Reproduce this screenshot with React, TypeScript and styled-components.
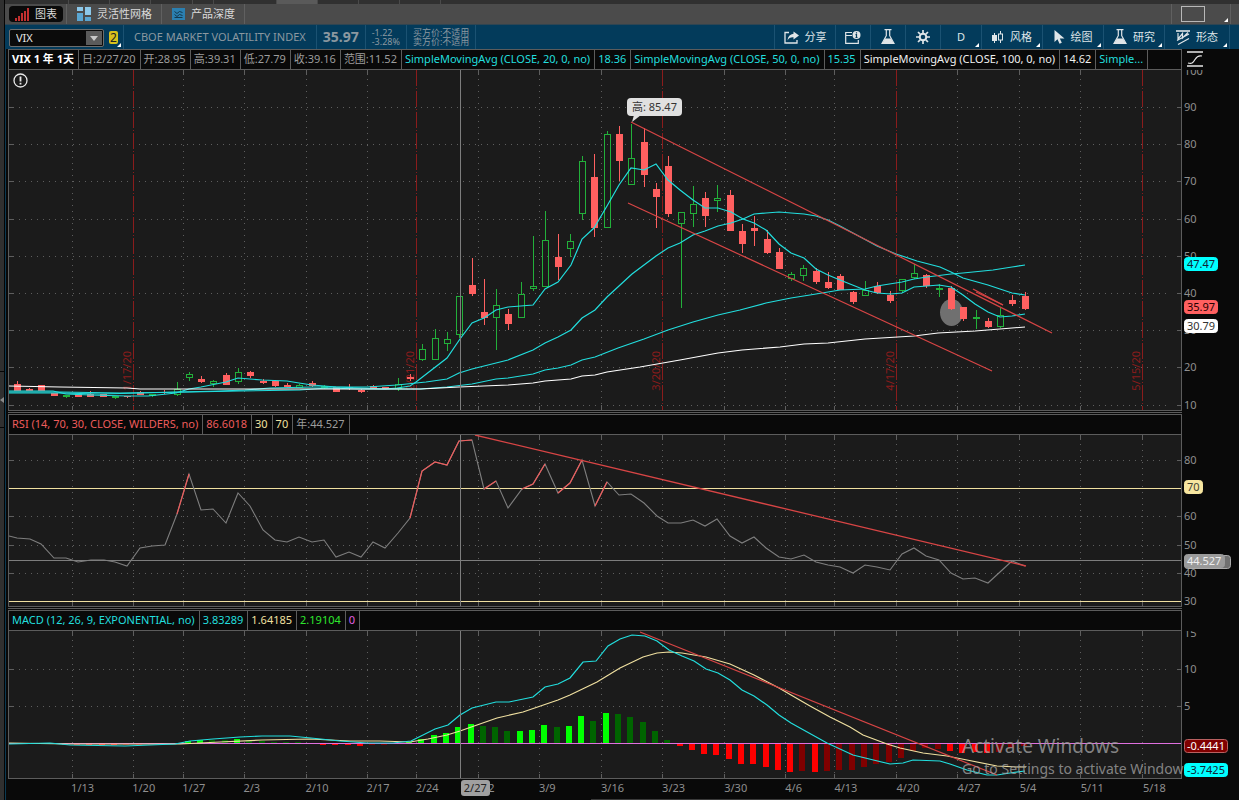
import React from "react";
import styled, { createGlobalStyle } from "styled-components";

const GlobalStyle = createGlobalStyle`
  * { box-sizing: border-box; }
  html, body { margin: 0; background: #090909; }
  body {
    font-family: "Noto Sans", "Noto Sans CJK SC", sans-serif;
    font-size: 11px;
    line-height: 16px;
    color: #d6d6d6;
  }
  button, select, input { font: inherit; color: inherit; margin: 0; }
`;

/* ---------- page frame ---------- */

const Page = styled.div`
  display: grid;
  grid-template-columns: 5px 1fr;
  min-height: 100vh;
  overflow: hidden;
`;
const Rail = styled.aside`
  background: #303030;
  border-right: 1px solid #050505;
  padding-top: 371px;
  display: flex;
  flex-direction: column;
`;
const RailSection = styled.div`
  height: 57px;
  border-top: 1px solid #050505;
  border-bottom: 1px solid #050505;
  display: flex;
  align-items: center;
`;
const Main = styled.main`
  min-width: 0;
`;
const Workspace = styled.div`
  border-left: 1px solid #0c3a52;
  padding-left: 2px;
`;

/* ---------- window strip and tabs ---------- */

const WindowStrip = styled.div`
  height: 4px;
  background: #303030;
  display: flex;
  overflow: hidden;
`;
const StripSlot = styled.span<{ $w: number; $active?: boolean }>`
  width: ${(p) => p.$w}px;
  border-right: 1px solid #4a4a4a;
  background: ${(p) => (p.$active ? "#5a5a5a" : "transparent")};
`;
const TabBar = styled.nav`
  height: 21px;
  background: #4b4b4b;
  border-bottom: 1px solid #2f4552;
  display: flex;
  align-items: stretch;
`;
const TabSlot = styled.div`
  display: flex;
  align-items: center;
  padding: 0 3px 0 4px;
  border-right: 1px solid #606060;
`;
const Tab = styled.button<{ $active?: boolean }>`
  display: flex;
  align-items: center;
  gap: 6px;
  height: 16px;
  padding: 0 6px;
  border: 0;
  border-radius: 4px;
  white-space: nowrap;
  background: ${(p) => (p.$active ? "#0a0a0a" : "transparent")};
  color: #dadada;
`;
const Spacer = styled.div`
  flex: 1;
`;
const LayoutButton = styled.button`
  position: relative;
  width: 60px;
  padding: 0 0 0 9px;
  margin-right: 8px;
  border: solid #606060;
  border-width: 0 1px;
  background: none;
  display: flex;
  align-items: center;
`;

/* ---------- symbol toolbar ---------- */

const ToolBar = styled.header`
  height: 24px;
  background: #033b5b;
  display: flex;
  align-items: stretch;
  padding-left: 4px;
`;
const SymbolBox = styled.div`
  display: flex;
  align-items: center;
  width: 95px;
  height: 18px;
  margin: 4px 0 2px;
  background: #0b0b0b;
  border: 1px solid #6d6d6d;
  border-radius: 2px;
`;
const SymbolInput = styled.input`
  width: 76px;
  height: 16px;
  padding: 0 6px;
  border: 0;
  outline: 0;
  background: transparent;
  color: #e4e4e4;
`;
const SymbolDrop = styled.button`
  width: 16px;
  height: 14px;
  padding: 0;
  border: 0;
  background: #5b5b5b;
  display: flex;
  align-items: center;
  justify-content: center;
`;
const LinkBadge = styled.button`
  position: relative;
  width: 20px;
  padding: 0 5px;
  border: 0;
  border-right: 1px solid #1b5272;
  background: none;
  display: flex;
  align-items: center;
`;
const BadgeFace = styled.span`
  width: 10px;
  height: 13px;
  border-radius: 2px;
  background: #d8c11c;
  color: #222;
  font-size: 12px;
  line-height: 13px;
  text-align: center;
`;
const QuoteCell = styled.div<{ $pad: number }>`
  display: flex;
  flex-direction: column;
  justify-content: center;
  padding: 0 ${(p) => p.$pad}px;
  border-right: 1px solid #1b5272;
  color: #8b98a0;
  white-space: nowrap;
`;
const Instrument = styled.span`
  font-size: 11px;
`;
const LastPrice = styled.strong`
  font-size: 14px;
`;
const Small = styled.span`
  font-size: 9px;
  line-height: 9px;
`;
const ToolButton = styled.button<{ $w: number }>`
  position: relative;
  width: ${(p) => p.$w}px;
  padding: 0;
  border: 0;
  border-left: 1px solid #1b5272;
  background: none;
  color: #dfe5e8;
  display: flex;
  align-items: center;
  justify-content: center;
  gap: 6px;
  white-space: nowrap;
`;
const Corner = styled.i`
  position: absolute;
  right: 2px;
  bottom: 2px;
  border: 2px solid transparent;
  border-right-color: #fff;
  border-bottom-color: #fff;
`;
const ToolEnd = styled.div`
  width: 10px;
  border-left: 1px solid #1b5272;
`;

/* ---------- study panels ---------- */

const Panel = styled.section`
  display: grid;
  grid-template-columns: 1fr 57px;
`;
const Legend = styled.div`
  height: 21px;
  min-width: 0;
  display: flex;
  overflow: hidden;
  border: 1px solid #5c5c5c;
  background: #090909;
`;
const LegendCell = styled.span<{ $color?: string; $bold?: boolean }>`
  display: flex;
  align-items: center;
  padding: 0 4px 1px 3px;
  border-right: 1px solid #5c5c5c;
  white-space: nowrap;
  color: ${(p) => p.$color ?? "#9c9c9c"};
  font-weight: ${(p) => (p.$bold ? 700 : 400)};
`;
const AxisHead = styled.div`
  display: flex;
  padding: 2px 0 0 5px;
`;
const Plot = styled.div<{ $h: number }>`
  position: relative;
  height: ${(p) => p.$h}px;
  background: #1b1b1b;
  border: solid #5c5c5c;
  border-width: 0 1px 1px;
`;
const PlotSvg = styled.svg`
  position: relative;
  display: block;
  width: 100%;
  height: 100%;
  polyline, line, rect, ellipse { vector-effect: non-scaling-stroke; }
`;
const AxisSvg = styled.svg`
  display: block;
  text { font-size: 11px; }
`;
const Divider = styled.div`
  height: 3px;
  margin-right: 57px;
  border: solid #090909;
  border-width: 1px 0;
  background: #5c5c5c;
`;
const ExpiryLabel = styled.span`
  position: absolute;
  bottom: 19px;
  width: 14px;
  margin-left: -13px;
  line-height: 14px;
  color: #8a1c1c;
  writing-mode: vertical-rl;
  transform: rotate(180deg);
`;
const PeakBubble = styled.span`
  position: absolute;
  top: 28px;
  height: 18px;
  padding: 0 5px;
  border-radius: 4px;
  background: #e0e0e0;
  color: #333;
  line-height: 18px;
  white-space: nowrap;
`;
const Notice = styled.button`
  position: absolute;
  left: 4px;
  top: 3px;
  padding: 0;
  border: 0;
  background: none;
  display: flex;
`;
const Watermark = styled.div`
  position: absolute;
  top: 103px;
  color: rgba(160, 160, 160, 0.8);
  white-space: nowrap;
  pointer-events: none;
`;
const WatermarkTitle = styled.div`
  font-size: 19px;
  line-height: 24px;
`;
const WatermarkText = styled.div`
  font-size: 14px;
  line-height: 22px;
`;
const TimeAxis = styled.div`
  position: relative;
  height: 20px;
  margin-right: 57px;
  color: #8f8f8f;
`;
const DateLabel = styled.span`
  position: absolute;
  top: 1px;
`;
const DateTag = styled(DateLabel)`
  padding: 0 3px;
  border-radius: 3px;
  background: #a0a0a0;
  color: #222;
`;
const ScrollEdge = styled.div`
  width: 320px;
  height: 1px;
  margin-left: 583px;
  background: #3a3a3a;
`;

/* ---------- chart data ---------- */

const LEFT = 9;
const WIDTH = 1172;
const pct = (x: number) => `${((x - LEFT) / WIDTH) * 100}%`;
const barX = (i: number) => Math.floor(17.2 + 12.293 * i);

const CYAN = "#22dede";
const RED = "#ff6060";
const GREEN = "#22b03a";
const TREND = "#d84545";
const CREAM = "#f0e0a0";

const weeks: [number, string][] = [
  [72, "1/13"], [133, "1/20"], [183, "1/27"], [244, "2/3"], [306, "2/10"], [367, "2/17"],
  [416, "2/24"], [478, "3/2"], [539, "3/9"], [601, "3/16"], [662, "3/23"], [724, "3/30"],
  [785, "4/6"], [834, "4/13"], [896, "4/20"], [957, "4/27"], [1019, "5/4"], [1080, "5/11"], [1142, "5/18"],
];
const expiries: [number, string][] = [
  [133, "1/17/20"], [416, "2/21/20"], [662, "3/20/20"], [896, "4/17/20"], [1142, "5/15/20"],
];

/* direction, high, body top, body bottom, low */
const candles: ["u" | "d", number, number, number, number][] = [
  ["d", 381, 384, 391, 391], ["d", 388, 389, 391, 391], ["d", 385, 385, 391, 391], ["d", 393, 393, 396, 396],
  ["u", 395, 395, 396, 397], ["d", 394, 394, 397, 397], ["d", 391, 394, 397, 397], ["d", 394, 394, 397, 397],
  ["u", 396, 396, 397, 398], ["d", 396, 396, 397, 398], ["d", 391, 392, 395, 395], ["u", 394, 394, 395, 396],
  ["d", 390, 392, 393, 394], ["u", 382, 389, 394, 395], ["u", 372, 374, 377, 380], ["d", 376, 379, 382, 383],
  ["u", 380, 381, 383, 386], ["d", 373, 375, 385, 385], ["u", 368, 372, 381, 383], ["d", 371, 372, 376, 378],
  ["d", 379, 381, 383, 384], ["d", 380, 381, 386, 387], ["d", 383, 385, 387, 388], ["u", 384, 385, 387, 387],
  ["d", 381, 383, 386, 387], ["u", 385, 386, 387, 388], ["d", 387, 387, 392, 392], ["d", 384, 387, 388, 390],
  ["d", 389, 390, 392, 393], ["d", 385, 386, 388, 388], ["d", 387, 387, 389, 389], ["u", 378, 384, 388, 390],
  ["d", 374, 377, 379, 381], ["u", 344, 349, 359, 360], ["u", 329, 338, 359, 359], ["u", 332, 339, 343, 350],
  ["u", 296, 296, 334, 337], ["d", 258, 285, 294, 296], ["d", 279, 312, 318, 325], ["u", 289, 305, 317, 349],
  ["d", 309, 314, 324, 330], ["u", 282, 294, 317, 317], ["u", 236, 286, 288, 290], ["u", 211, 240, 286, 286],
  ["d", 234, 257, 267, 280], ["u", 234, 241, 248, 256], ["u", 156, 161, 213, 219], ["d", 154, 177, 228, 237],
  ["u", 131, 134, 227, 227], ["d", 126, 134, 161, 181], ["u", 124, 158, 184, 184], ["d", 128, 142, 175, 187],
  ["d", 183, 189, 197, 228], ["d", 156, 166, 214, 217], ["u", 212, 212, 223, 307], ["u", 186, 204, 213, 226],
  ["d", 192, 198, 216, 227], ["u", 185, 198, 200, 211], ["d", 190, 195, 231, 231], ["d", 224, 231, 244, 253],
  ["d", 216, 228, 231, 246], ["d", 230, 239, 253, 254], ["d", 248, 252, 269, 269], ["u", 272, 274, 278, 280],
  ["u", 265, 268, 275, 280], ["d", 268, 271, 282, 284], ["d", 272, 282, 288, 289], ["d", 274, 276, 290, 290],
  ["d", 291, 292, 302, 304], ["u", 281, 290, 295, 295], ["d", 282, 286, 293, 294], ["d", 291, 295, 301, 303],
  ["u", 279, 279, 290, 292], ["u", 264, 273, 277, 278], ["d", 274, 275, 286, 288], ["u", 284, 288, 289, 296],
  ["d", 286, 288, 309, 310], ["d", 307, 307, 319, 321], ["u", 310, 317, 318, 328], ["d", 318, 321, 327, 328],
  ["u", 308, 315, 326, 327], ["d", 295, 300, 304, 306], ["d", 292, 296, 309, 310],
];

const smaFast =
  "9,391 53,391 66,394 90,395 127,396 148,396 176,393 189,389 201,387 226,382 238,378 262,380 287,381 299,383 312,385 336,387 361,388 385,389 397,388 410,386 416,382 447,358 460,339 472,323 484,318 496,310 508,307 533,305 545,289 558,282 571,265 582,239 594,228 607,206 619,185 631,168 644,170 656,164 668,180 680,190 693,200 705,208 718,208 731,212 743,219 754,223 766,230 779,244 791,253 804,258 816,269 828,275 840,280 865,290 877,293 891,294 902,293 914,287 927,286 939,285 951,287 963,295 975,304 988,312 1000,317 1012,316 1025,314";
const sma20 =
  "9,393 60,393 100,394 180,392 220,391 245,390 270,388 312,387 367,387 397,385 426,382 447,379 459,373 472,369 508,360 533,350 545,343 558,337 571,330 582,318 595,310 607,297 619,286 632,274 656,256 668,248 680,243 693,235 705,231 718,226 731,223 743,219 754,214 766,213 779,212 791,213 804,214 816,216 828,220 840,226 853,233 866,240 877,246 896,254 917,261 940,267 951,272 963,278 988,285 1000,289 1012,293 1025,295";
const sma50 =
  "9,392 60,392 120,393 190,392 240,391 300,390 327,388 360,389 420,389 447,387 472,384 496,379 508,378 533,374 545,370 558,368 571,365 582,360 595,357 618,348 644,339 668,330 693,322 718,315 740,310 766,303 791,298 810,295 840,290 865,289 877,286 902,282 914,279 927,277 951,274 963,273 993,270 1012,267 1025,265";
const sma100 =
  "9,386 60,387 127,388 140,389 300,389 421,389 459,387 508,385 533,383 545,381 571,379 582,376 595,375 607,372 640,367 680,360 718,353 742,350 780,347 804,344 828,343 865,339 914,336 938,333 975,331 1000,329 1025,327";

const rsiPts: [number, number][] = [
  [9, 536], [17, 538], [30, 539], [41, 544], [54, 558], [66, 558], [78, 562], [91, 560], [104, 560], [115, 562],
  [127, 566], [140, 548], [152, 546], [165, 545], [177, 514], [189, 474], [201, 510], [213, 509], [226, 523],
  [238, 493], [250, 506], [263, 530], [275, 540], [287, 542], [299, 537], [312, 542], [324, 540], [336, 557],
  [349, 552], [361, 557], [373, 542], [385, 548], [398, 533], [410, 518], [422, 471], [435, 462], [447, 465],
  [459, 441], [472, 440], [484, 489], [496, 481], [508, 508], [522, 489], [533, 484], [545, 464], [558, 493],
  [570, 483], [582, 460], [595, 506], [607, 482], [619, 495], [631, 494], [644, 503], [657, 516], [668, 523],
  [681, 523], [693, 520], [705, 526], [717, 519], [730, 536], [742, 543], [754, 537], [766, 548], [779, 557],
  [791, 559], [804, 555], [816, 562], [828, 565], [840, 567], [853, 573], [865, 565], [877, 567], [890, 570],
  [902, 554], [914, 548], [926, 556], [939, 560], [951, 573], [963, 579], [975, 578], [988, 583], [1000, 572],
  [1012, 561], [1025, 566],
];
const rsiHot = ["177,514 189,474", "410,518 422,471 435,462 447,465 459,441 472,440", "484,489 496,481", "522,489 533,484 545,464", "558,493 570,483 582,460", "595,506 607,482"];

const macdLine =
  "9,744 50,743 70,745 125,746 175,744 190,741 213,739 240,737 262,736 290,736 311,738 340,741 367,743 393,743 411,741 435,729 448,725 460,715 472,708 496,702 509,702 533,697 545,687 558,684 570,678 583,662 596,661 608,646 620,639 632,635 645,636 657,641 669,650 682,656 694,661 706,669 718,673 730,680 742,690 754,696 767,705 779,715 791,723 827,743 853,755 890,764 903,763 913,760 940,761 950,764 967,770 987,775 997,775 1010,773 1025,771";
const signalLine =
  "9,743 70,744 180,744 220,742 262,740 310,739 350,741 380,741 410,742 428,739 447,735 460,731 477,725 497,718 523,712 558,700 570,695 597,682 620,668 643,657 657,653 669,652 682,653 706,657 730,664 754,675 779,688 791,695 810,706 830,717 850,727 863,735 887,744 900,748 923,753 947,756 967,760 997,766 1017,767 1026,767";

/* histogram end y and colour: G/g bright and dark green, R/r bright and dark red */
const hist: [string, number][] = [
  ["R", 744], ["g", 743], ["R", 744], ["R", 744], ["R", 745], ["R", 745], ["R", 745], ["R", 745],
  ["R", 745], ["r", 745], ["r", 745], ["r", 745], ["r", 744], ["r", 744], ["G", 741], ["G", 740], ["g", 740],
  ["g", 740], ["G", 739], ["g", 740], ["g", 741], ["g", 742], ["g", 742], ["g", 742], ["R", 744], ["R", 745],
  ["R", 745], ["R", 745], ["R", 746], ["r", 745], ["r", 745], ["r", 744], ["G", 742], ["G", 739], ["G", 735],
  ["G", 733], ["G", 727], ["G", 724], ["g", 726], ["g", 727], ["g", 731], ["G", 731], ["G", 730], ["G", 725],
  ["g", 727], ["G", 726], ["G", 716], ["g", 721], ["G", 713], ["g", 714], ["g", 717], ["g", 722], ["g", 731],
  ["g", 740], ["R", 746], ["R", 750], ["R", 754], ["R", 755], ["R", 759], ["R", 764], ["R", 764], ["R", 767],
  ["R", 770], ["R", 772], ["r", 771], ["R", 772], ["r", 771], ["r", 770], ["r", 770], ["r", 767], ["r", 764],
  ["r", 762], ["r", 758], ["r", 751], ["r", 748], ["r", 749], ["R", 751], ["R", 753], ["R", 752], ["R", 753],
  ["r", 752], ["r", 748], ["r", 746],
];
const histColor: Record<string, string> = { G: "#00ff00", g: "#006400", R: "#ff0000", r: "#800000" };

/* ---------- chart parts ---------- */

function Grid({ top, bottom, rows }: { top: number; bottom: number; rows: number[] }) {
  return (
    <g stroke="#5e5e5e" shapeRendering="crispEdges">
      {weeks.map(([x]) => (
        <g key={x}>
          <line x1={x + 0.5} x2={x + 0.5} y1={top + 9} y2={bottom - 4} strokeDasharray="1 5" />
          <line x1={x + 0.5} x2={x + 0.5} y1={top} y2={top + 5} />
          <line x1={x + 0.5} x2={x + 0.5} y1={bottom - 4} y2={bottom} />
        </g>
      ))}
      {rows.map((y) => (
        <g key={y}>
          <line x1={LEFT + 10} x2={1167} y1={y + 0.5} y2={y + 0.5} strokeDasharray="1 5" />
          <line x1={LEFT} x2={LEFT + 5} y1={y + 0.5} y2={y + 0.5} />
          <line x1={1177} x2={1181} y1={y + 0.5} y2={y + 0.5} />
        </g>
      ))}
    </g>
  );
}

function Cursor({ top, bottom }: { top: number; bottom: number }) {
  return <line x1={460.5} x2={460.5} y1={top} y2={bottom} stroke="#7d7d7d" shapeRendering="crispEdges" />;
}

type TagSpec = { y: number; text: string; fill: string; ink: string; w?: number; line?: string };

function Axis({ top, height, labels, tags }: { top: number; height: number; labels: [number, string][]; tags: TagSpec[] }) {
  return (
    <AxisSvg width="57" height={height} viewBox={`0 ${top} 57 ${height}`}>
      {labels.map(([y, t]) => (
        <text key={t} x="2" y={y + 4} fill="#8f8f8f">{t}</text>
      ))}
      {tags.map((t) => (
        <g key={t.text}>
          <rect x="2.5" y={t.y - 6.5} width={t.w ?? 33} height="13" rx="3" fill={t.fill} stroke={t.line ?? t.fill} />
          <text x="5" y={t.y + 4} fill={t.ink}>{t.text}</text>
        </g>
      ))}
    </AxisSvg>
  );
}

function PricePlot() {
  return (
    <Plot $h={341}>
      {expiries.map(([x, t]) => (
        <ExpiryLabel key={t} style={{ left: pct(x) }}>{t}</ExpiryLabel>
      ))}
      <PlotSvg viewBox="9 70 1172 340" preserveAspectRatio="none" fill="none">
        <Grid top={70} bottom={410} rows={[107, 144, 181, 219, 256, 293, 330, 367, 405]} />
        {expiries.map(([x]) => (
          <line key={x} x1={x + 0.5} x2={x + 0.5} y1={70} y2={410} stroke="#8a1c1c" strokeDasharray="16 2 1 2" shapeRendering="crispEdges" />
        ))}
        <ellipse cx="951.5" cy="312.5" rx="11.5" ry="13.5" fill="#707070" />
        <g shapeRendering="crispEdges">
          {candles.map(([dir, hi, top, bot, lo], i) => {
            const x = barX(i);
            return dir === "d" ? (
              <g key={i}>
                <line x1={x + 0.5} x2={x + 0.5} y1={hi} y2={lo} stroke={RED} />
                <rect x={x - 3} y={top} width={7} height={bot - top} fill={RED} />
              </g>
            ) : (
              <g key={i} stroke={GREEN}>
                <line x1={x + 0.5} x2={x + 0.5} y1={hi} y2={top} />
                <line x1={x + 0.5} x2={x + 0.5} y1={bot} y2={lo + 1} />
                <rect x={x - 2.5} y={top + 0.5} width={6} height={bot - top} />
              </g>
            );
          })}
        </g>
        <g stroke={CYAN} strokeWidth="1.2">
          <polyline points={sma20} />
          <polyline points={sma50} />
          <polyline points={smaFast} />
        </g>
        <polyline points={sma100} stroke="#fff" strokeWidth="1.1" />
        <g stroke={TREND} strokeWidth="1.2">
          <line x1="631" y1="122" x2="1052" y2="333" />
          <line x1="628" y1="203" x2="992" y2="371" />
          <line x1="973" y1="289" x2="1003" y2="305" />
          <line x1="976" y1="292" x2="1003" y2="305" />
        </g>
        <Cursor top={70} bottom={410} />
        <path d="M634 115 L632 122 L641 115 Z" fill="#e0e0e0" />
      </PlotSvg>
      <PeakBubble style={{ left: pct(627) }}>高: 85.47</PeakBubble>
      <Notice aria-label="提示">
        <svg width="15" height="15" viewBox="0 0 15 15" fill="none" stroke="#e8e8e8">
          <circle cx="7.5" cy="7.5" r="6.5" strokeWidth="1.3" />
          <path d="M7.5 3.5v5M7.5 9.8v1.8" strokeWidth="1.8" />
        </svg>
      </Notice>
    </Plot>
  );
}

function RsiPlot() {
  return (
    <Plot $h={172}>
      <PlotSvg viewBox="9 435 1172 171" preserveAspectRatio="none" fill="none">
        <Grid top={435} bottom={606} rows={[460, 516, 545, 573]} />
        <g shapeRendering="crispEdges">
          <line x1={9} x2={1181} y1={488.5} y2={488.5} stroke={CREAM} />
          <line x1={9} x2={1181} y1={601.5} y2={601.5} stroke={CREAM} />
          <line x1={9} x2={1181} y1={560.5} y2={560.5} stroke="#7d7d7d" />
        </g>
        <polyline points={rsiPts.map((p) => p.join()).join(" ")} stroke="#7e7e7e" strokeWidth="1.1" />
        {rsiHot.map((p) => (
          <polyline key={p} points={p} stroke="#ee5c5c" strokeWidth="1.2" />
        ))}
        <line x1="475" y1="435" x2="1026" y2="566" stroke={TREND} strokeWidth="1.3" />
        <Cursor top={435} bottom={606} />
      </PlotSvg>
    </Plot>
  );
}

function MacdPlot() {
  return (
    <Plot $h={148}>
      <PlotSvg viewBox="9 631 1172 147" preserveAspectRatio="none" fill="none">
        <Grid top={631} bottom={778} rows={[669, 706]} />
        <g shapeRendering="crispEdges">
          {hist.map(([c, y], i) => (
            <rect key={i} x={barX(i) - 4} y={Math.min(y, 743)} width={6} height={Math.max(1, Math.abs(743 - y))} fill={histColor[c]} />
          ))}
          <line x1={9} x2={1181} y1={743.5} y2={743.5} stroke="#e070e0" />
        </g>
        <polyline points={signalLine} stroke={CREAM} strokeWidth="1.2" />
        <polyline points={macdLine} stroke={CYAN} strokeWidth="1.2" />
        <line x1="640" y1="632" x2="997" y2="775" stroke={TREND} strokeWidth="1.2" />
        <Cursor top={631} bottom={778} />
      </PlotSvg>
      <Watermark style={{ left: pct(962) }}>
        <WatermarkTitle>Activate Windows</WatermarkTitle>
        <WatermarkText>Go to Settings to activate Window</WatermarkText>
      </Watermark>
    </Plot>
  );
}

/* ---------- icons ---------- */

const BarsIcon = () => (
  <svg width="14" height="13" viewBox="0 0 14 13" fill="#c22f2f">
    <path d="M0 10h2v3H0zM3 8h2v5H3zM6 5h2v8H6zM9 3h2v10H9zM12 0h2v13h-2z" />
  </svg>
);
const GridIcon = () => (
  <svg width="14" height="14" viewBox="0 0 14 14">
    <path d="M0 0h6v4H0zM8 0h6v8H8z" fill="#8cc8ea" />
    <path d="M0 6h6v8H0zM8 10h6v4H8z" fill="#5aa6d2" />
  </svg>
);
const DepthIcon = () => (
  <svg width="13" height="12" viewBox="0 0 13 12" fill="none">
    <rect width="13" height="12" fill="#2b7fb0" />
    <path d="M2.500 3.500L5 5.500 7.500 3.500 10.500 4.500M2.500 6.500L5 8.500 7.500 6.500 10.500 7.500M2.500 9.500h8" stroke="#12384e" />
  </svg>
);
const ShareIcon = () => (
  <svg width="15" height="13" viewBox="0 0 15 13" fill="none">
    <path d="M5 1.500H1v10.500h12V9" stroke="#dfe5e8" strokeWidth="1.300" />
    <path d="M9.500 0.500L15 4.500 9.500 8.500V6.200C6.500 6 4.800 7 3.500 9.500 3.800 5.500 6 3.200 9.500 2.800Z" fill="#dfe5e8" />
  </svg>
);
const CalendarIcon = () => (
  <svg width="16" height="13" viewBox="0 0 16 13" fill="none">
    <path d="M7 1.500H0.700v10.800h12.600V9M0.700 4.500H7" stroke="#dfe5e8" strokeWidth="1.200" />
    <circle cx="11.500" cy="4" r="4" fill="#dfe5e8" />
    <path d="M11.500 1.200v1.300M10.500 3.700h1v3M10.500 6.500h2" stroke="#033b5b" strokeWidth="1.200" />
  </svg>
);
const FlaskIcon = () => (
  <svg width="14" height="16" viewBox="0 0 14 16" fill="none">
    <path d="M3.500 0.700h7M5.300 0.700v6L1 14.500h12L8.700 6.700v-6" stroke="#dfe5e8" strokeWidth="1.200" />
    <path d="M4 9.500h6l3 5.500H1z" fill="#dfe5e8" />
  </svg>
);
const GearIcon = () => (
  <svg width="14" height="14" viewBox="0 0 14 14" fill="none" stroke="#dfe5e8">
    <circle cx="7" cy="7" r="3.300" strokeWidth="2" />
    <path d="M7 0v3M7 11v3M0 7h3M11 7h3M2 2l2.200 2.200M9.800 9.800L12 12M2 12l2.200-2.200M9.800 4.200L12 2" strokeWidth="1.700" />
  </svg>
);
const CandleIcon = () => (
  <svg width="12" height="13" viewBox="0 0 12 13" fill="none" stroke="#dfe5e8">
    <path d="M2.500 2v10M8.500 0v3M8.500 9v3" />
    <rect x="0" y="4" width="5" height="6" fill="#dfe5e8" stroke="none" />
    <rect x="6.500" y="3" width="4" height="6" />
  </svg>
);
const PointerIcon = () => (
  <svg width="11" height="14" viewBox="0 0 11 14" fill="#dfe5e8">
    <path d="M0.500 0v12l3-2.800 2 4.500 2.300-1-2-4.300H10.500z" />
  </svg>
);
const PatternIcon = () => (
  <svg width="14" height="15" viewBox="0 0 14 15" fill="none" stroke="#dfe5e8">
    <path d="M0 1h14" strokeWidth="1.600" />
    <path d="M1 10.500L13 4M2 14.500L13 8.500M2 3v6L6.500 3.500V8L12 2.500" strokeWidth="1.200" />
  </svg>
);
const CurveIcon = () => (
  <svg width="16" height="16" viewBox="0 0 16 16" fill="none" stroke="#e8e8e8">
    <path d="M0 1h16M0 15h16" strokeWidth="1.600" />
    <path d="M1 12C5 13.500 6.500 11 8 8.500S11 4 15 5" strokeWidth="1.200" />
  </svg>
);
const DropIcon = () => (
  <svg width="8" height="5" viewBox="0 0 8 5" fill="#c8c8c8"><path d="M0 0h8L4 5z" /></svg>
);

/* ---------- application ---------- */

export default function App() {
  return (
    <>
      <GlobalStyle />
      <Page>
        <Rail>
          <RailSection>
            <svg width="4" height="6" viewBox="0 0 4 6" fill="#8a8a8a"><path d="M4 0v6L0 3z" /></svg>
          </RailSection>
        </Rail>
        <Main>
          <WindowStrip>
            {[64, 41, 41, 42, 21, 63].map((w, i) => <StripSlot key={i} $w={w} />)}
            <StripSlot $w={41} $active />
            <StripSlot $w={41} />
            <StripSlot $w={41} />
            <StripSlot $w={41} />
          </WindowStrip>
          <TabBar>
            <TabSlot><Tab $active><BarsIcon />图表</Tab></TabSlot>
            <TabSlot><Tab><GridIcon />灵活性网格</Tab></TabSlot>
            <TabSlot><Tab><DepthIcon />产品深度</Tab></TabSlot>
            <Spacer />
            <LayoutButton aria-label="布局">
              <svg width="24" height="16" viewBox="0 0 24 16"><rect x="0.500" y="0.500" width="23" height="15" fill="none" stroke="#b8b8b8" /></svg>
              <Corner />
            </LayoutButton>
          </TabBar>
          <ToolBar>
            <SymbolBox>
              <SymbolInput aria-label="代码" defaultValue="VIX" />
              <SymbolDrop aria-label="选择代码"><DropIcon /></SymbolDrop>
            </SymbolBox>
            <LinkBadge><BadgeFace>2</BadgeFace><Corner /></LinkBadge>
            <QuoteCell $pad={10}><Instrument>CBOE MARKET VOLATILITY INDEX</Instrument></QuoteCell>
            <QuoteCell $pad={6}><LastPrice>35.97</LastPrice></QuoteCell>
            <QuoteCell $pad={6}><Small>-1.22</Small><Small>-3.28%</Small></QuoteCell>
            <QuoteCell $pad={6}><Small>买方价:不适用</Small><Small>卖方价:不适用</Small></QuoteCell>
            <Spacer />
            <ToolButton $w={61}><ShareIcon />分享</ToolButton>
            <ToolButton $w={35} aria-label="日历"><CalendarIcon /></ToolButton>
            <ToolButton $w={35} aria-label="测试"><FlaskIcon /></ToolButton>
            <ToolButton $w={35} aria-label="设置"><GearIcon /></ToolButton>
            <ToolButton $w={41}>D<Corner /></ToolButton>
            <ToolButton $w={61}><CandleIcon />风格<Corner /></ToolButton>
            <ToolButton $w={61}><PointerIcon />绘图<Corner /></ToolButton>
            <ToolButton $w={61}><FlaskIcon />研究<Corner /></ToolButton>
            <ToolButton $w={65}><PatternIcon />形态<Corner /></ToolButton>
            <ToolEnd />
          </ToolBar>

          <Workspace>
            <Panel>
              <Legend>
                <LegendCell $bold $color="#fff">VIX 1 年 1天</LegendCell>
                <LegendCell>日:2/27/20</LegendCell>
                <LegendCell>开:28.95</LegendCell>
                <LegendCell>高:39.31</LegendCell>
                <LegendCell>低:27.79</LegendCell>
                <LegendCell>收:39.16</LegendCell>
                <LegendCell>范围:11.52</LegendCell>
                <LegendCell $color={CYAN}>SimpleMovingAvg (CLOSE, 20, 0, no)</LegendCell>
                <LegendCell $color={CYAN}>18.36</LegendCell>
                <LegendCell $color={CYAN}>SimpleMovingAvg (CLOSE, 50, 0, no)</LegendCell>
                <LegendCell $color={CYAN}>15.35</LegendCell>
                <LegendCell $color="#f0f0f0">SimpleMovingAvg (CLOSE, 100, 0, no)</LegendCell>
                <LegendCell $color="#f0f0f0">14.62</LegendCell>
                <LegendCell $color={CYAN}>Simple...</LegendCell>
              </Legend>
              <AxisHead><CurveIcon /></AxisHead>
              <PricePlot />
              <Axis
                top={70}
                height={341}
                labels={[[71, "100"], [107, "90"], [144, "80"], [181, "70"], [219, "60"], [256, "50"], [293, "40"], [330, "30"], [367, "20"], [405, "10"]]}
                tags={[
                  { y: 264, text: "47.47", fill: "#00ffff", ink: "#123" },
                  { y: 307, text: "35.97", fill: "#ff6060", ink: "#200" },
                  { y: 326, text: "30.79", fill: "#ffffff", ink: "#333" },
                ]}
              />
            </Panel>
            <Divider />
            <Panel>
              <Legend>
                <LegendCell $color="#ee5c5c">RSI (14, 70, 30, CLOSE, WILDERS, no)</LegendCell>
                <LegendCell $color="#ee5c5c">86.6018</LegendCell>
                <LegendCell $color={CREAM}>30</LegendCell>
                <LegendCell $color={CREAM}>70</LegendCell>
                <LegendCell>年:44.527</LegendCell>
              </Legend>
              <div />
              <RsiPlot />
              <Axis
                top={435}
                height={172}
                labels={[[460, "80"], [516, "60"], [545, "50"], [573, "40"], [601, "30"]]}
                tags={[
                  { y: 487, text: "70", fill: "#f7e6a0", ink: "#443", w: 18 },
                  { y: 562, text: "", fill: "#707070", ink: "#707070", w: 46, line: "#aaaaaa" },
                  { y: 561, text: "44.527", fill: "#9a9a9a", ink: "#eeeeee", w: 40 },
                ]}
              />
            </Panel>
            <Divider />
            <Panel>
              <Legend>
                <LegendCell $color={CYAN}>MACD (12, 26, 9, EXPONENTIAL, no)</LegendCell>
                <LegendCell $color={CYAN}>3.83289</LegendCell>
                <LegendCell $color={CREAM}>1.64185</LegendCell>
                <LegendCell $color="#2ee62e">2.19104</LegendCell>
                <LegendCell $color="#e060e0">0</LegendCell>
              </Legend>
              <div />
              <MacdPlot />
              <Axis
                top={631}
                height={148}
                labels={[[633, "15"], [669, "10"], [706, "5"]]}
                tags={[
                  { y: 746, text: "-0.4441", fill: "#800000", ink: "#ffffff", w: 43, line: "#b86060" },
                  { y: 770, text: "-3.7425", fill: "#00ffff", ink: "#123", w: 43 },
                ]}
              />
            </Panel>
            <TimeAxis>
              {weeks.map(([x, t]) => (
                <DateLabel key={t} style={{ left: pct(x) }}>{t}</DateLabel>
              ))}
              <DateTag style={{ left: pct(461) }}>2/27</DateTag>
            </TimeAxis>
            <ScrollEdge />
          </Workspace>
        </Main>
      </Page>
    </>
  );
}
